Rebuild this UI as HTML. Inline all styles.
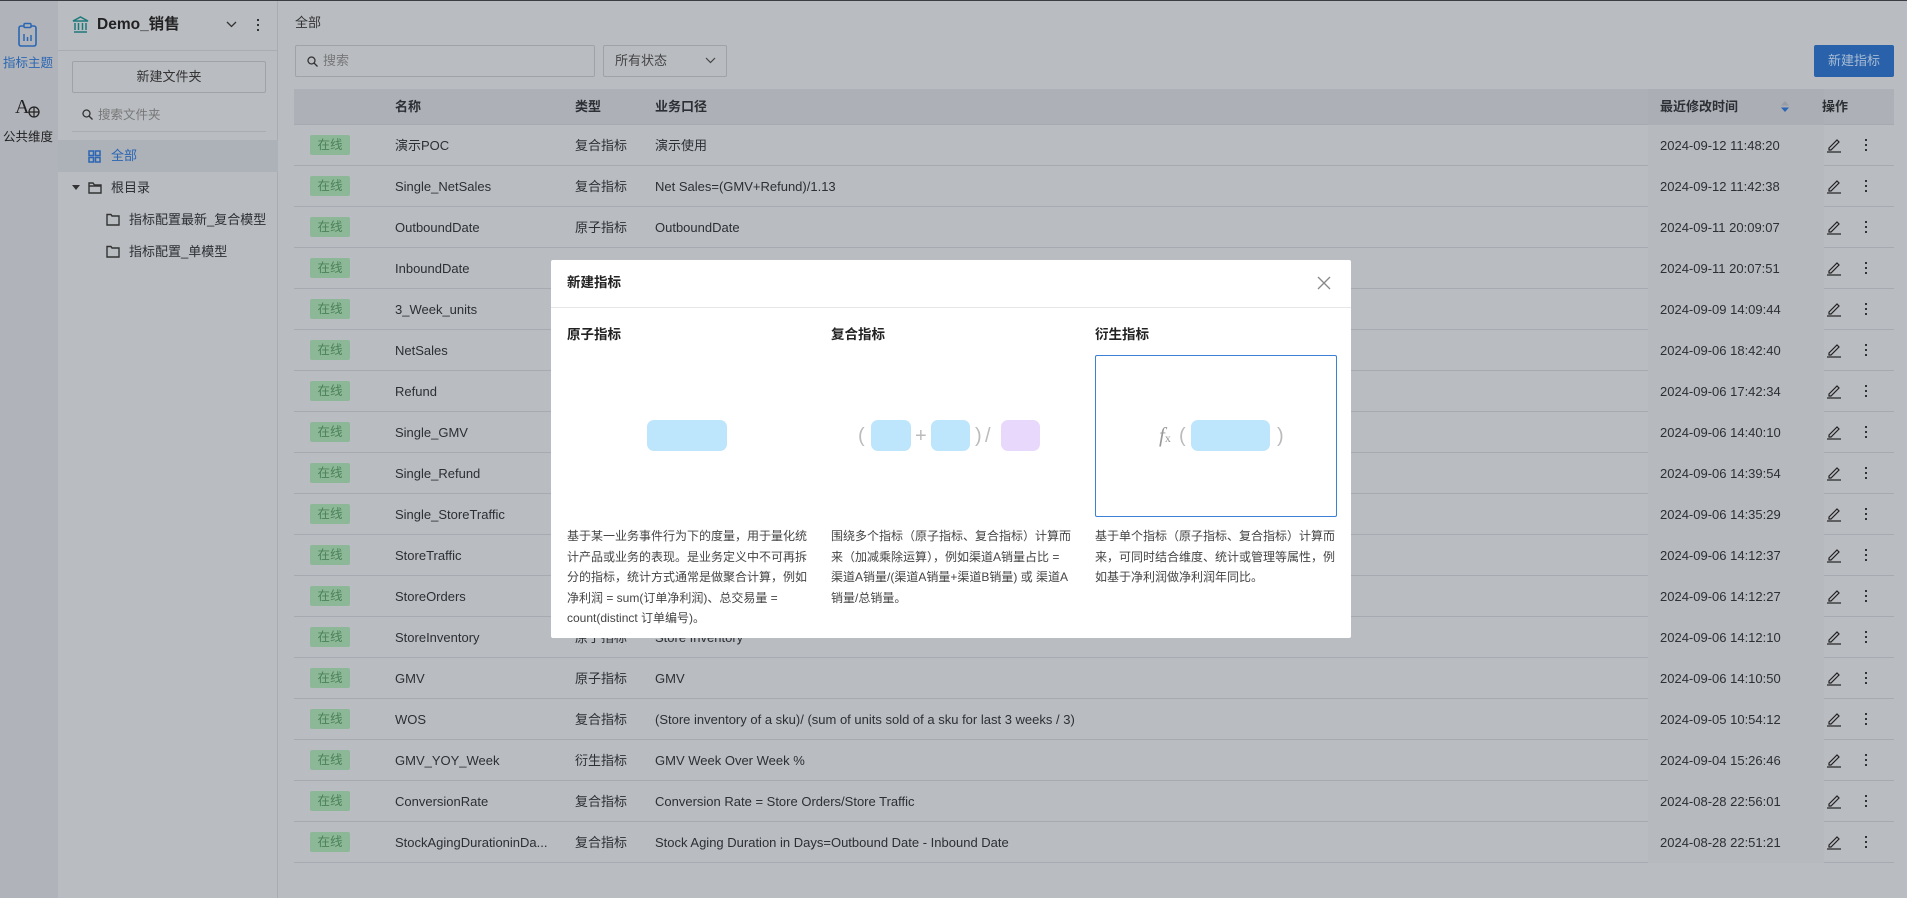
<!DOCTYPE html>
<html><head><meta charset="utf-8"><style>
*{box-sizing:border-box;margin:0;padding:0}
body{width:1907px;height:898px;overflow:hidden;position:relative;background:#b9bcc1;font-family:"Liberation Sans","Noto Sans CJK SC",sans-serif;color:#2c2f34;font-size:13px;line-height:16px}
.abs{position:absolute}
.rail{left:0;top:0;width:58px;height:898px;background:#b0b4ba}
.side{left:58px;top:0;width:220px;height:898px;background:#b9bcc1;border-right:1px solid #a9adb3}
.topline{left:0;top:0;width:1907px;height:1px;background:#3a3d42}
.row{position:absolute;left:294px;width:1600px;height:41px;border-bottom:1px solid #a7abb1}
.row span{position:absolute;top:13px;white-space:nowrap;line-height:16px}
.badge{left:16px;top:10px!important;width:40px;height:20px;background:#8db897;color:#4a8258;text-align:center;line-height:20px!important;border-radius:2px;font-size:12.5px}
.tc{position:absolute;left:1354px;top:0;width:176px;height:41px;background:#b6b9be}
.dots{position:absolute;left:1571px;top:14px;width:3px;height:13px}
.dots i{display:block;width:2px;height:2px;background:#333;margin:0 0 3px 0}
.modal{left:551px;top:260px;width:800px;height:378px;background:#fff;border-radius:2px}
.mt{font-weight:bold;font-size:13.5px;color:#222}
.desc{font-size:12px;line-height:20.6px;color:#444;width:240px}
.bx{position:absolute;background:#bde5fc;border-radius:7px;height:31px}
</style></head><body>
<div class="abs rail"></div>
<div class="abs side"></div>
<div class="abs topline"></div>
<!-- rail -->
<svg class="abs" style="left:17px;top:22px" width="22" height="26" viewBox="0 0 22 26"><rect x="2" y="4" width="17" height="20" rx="2" fill="none" stroke="#2a66b3" stroke-width="1.6"/><rect x="7" y="1.5" width="7" height="4" rx="1" fill="#b0b4ba" stroke="#2a66b3" stroke-width="1.5"/><path d="M7 12v7M10.5 15v4M14 13v6" stroke="#2a66b3" stroke-width="1.5"/></svg>
<div class="abs" style="left:3px;top:55px;font-size:12.5px;color:#2a66b3">指标主题</div>
<div class="abs" style="left:15px;top:96px;font-size:20px;line-height:22px;font-family:'Liberation Serif',serif;color:#222">A</div>
<svg class="abs" style="left:28px;top:106px" width="12" height="12" viewBox="0 0 12 12"><circle cx="6" cy="6" r="5" fill="none" stroke="#222" stroke-width="1.3"/><path d="M1 6h10M6 1v10" stroke="#222" stroke-width="1.2"/></svg>
<div class="abs" style="left:3px;top:129px;font-size:12.5px;color:#222">公共维度</div>
<!-- sidebar -->
<svg class="abs" style="left:72px;top:16px" width="17" height="17" viewBox="0 0 17 17"><path d="M1 5L8.5 1L16 5ZM2 16h13M3 7v7M6.5 7v7M10.5 7v7M14 7v7M1 5h15" fill="none" stroke="#1d7a7a" stroke-width="1.5"/></svg>
<div class="abs" style="left:97px;top:16px;font-size:15.5px;line-height:18px;font-weight:bold;color:#222">Demo_销售</div>
<svg class="abs" style="left:226px;top:21px" width="11" height="7"><path d="M1 1l4.5 4.5L10 1" fill="none" stroke="#333" stroke-width="1.3"/></svg>
<div class="abs" style="left:257px;top:19px;width:2px"><i style="display:block;width:2px;height:2px;background:#333;margin-bottom:3px"></i><i style="display:block;width:2px;height:2px;background:#333;margin-bottom:3px"></i><i style="display:block;width:2px;height:2px;background:#333"></i></div>
<div class="abs" style="left:58px;top:50px;width:220px;height:1px;background:#a9adb3"></div>
<div class="abs" style="left:72px;top:61px;width:194px;height:32px;border:1px solid #9fa3a9;border-radius:2px;text-align:center;line-height:30px;font-size:13px;color:#333">新建文件夹</div>
<svg class="abs" style="left:82px;top:109px" width="11" height="11"><circle cx="4.5" cy="4.5" r="3.5" fill="none" stroke="#333" stroke-width="1.3"/><path d="M7 7l3.5 3.5" stroke="#333" stroke-width="1.3"/></svg>
<div class="abs" style="left:98px;top:107px;font-size:12.5px;color:#777">搜索文件夹</div>
<div class="abs" style="left:72px;top:131px;width:194px;height:1px;background:#a9adb3"></div>
<div class="abs" style="left:58px;top:140px;width:220px;height:32px;background:#adb1b8"></div>
<svg class="abs" style="left:88px;top:150px" width="13" height="13"><g fill="none" stroke="#2a66b3" stroke-width="1.5"><rect x="1" y="1" width="4.5" height="4.5"/><rect x="7.5" y="1" width="4.5" height="4.5"/><rect x="1" y="7.5" width="4.5" height="4.5"/><rect x="7.5" y="7.5" width="4.5" height="4.5"/></g></svg>
<div class="abs" style="left:111px;top:148px;font-size:13px;color:#2a66b3">全部</div>
<svg class="abs" style="left:72px;top:185px" width="8" height="6"><path d="M0 0h8L4 5z" fill="#333"/></svg>
<svg class="abs" style="left:88px;top:181px" width="14" height="13"><path d="M1 2h4l1.5 2H13v8H1z M1 5h12" fill="none" stroke="#333" stroke-width="1.4"/></svg>
<div class="abs" style="left:111px;top:180px;font-size:13px">根目录</div>
<svg class="abs" style="left:106px;top:213px" width="14" height="13"><path d="M1 1.5h4l1 1.5H13v9H1z" fill="none" stroke="#333" stroke-width="1.4"/></svg>
<div class="abs" style="left:129px;top:212px;font-size:13px">指标配置最新_复合模型</div>
<svg class="abs" style="left:106px;top:245px" width="14" height="13"><path d="M1 1.5h4l1 1.5H13v9H1z" fill="none" stroke="#333" stroke-width="1.4"/></svg>
<div class="abs" style="left:129px;top:244px;font-size:13px">指标配置_单模型</div>
<!-- main -->
<div class="abs" style="left:295px;top:15px;font-size:13px;color:#333">全部</div>
<div class="abs" style="left:295px;top:45px;width:300px;height:32px;border:1px solid #9fa3a9;border-radius:2px"></div>
<svg class="abs" style="left:307px;top:56px" width="11" height="11"><circle cx="4.5" cy="4.5" r="3.5" fill="none" stroke="#333" stroke-width="1.3"/><path d="M7 7l3.5 3.5" stroke="#333" stroke-width="1.3"/></svg>
<div class="abs" style="left:323px;top:53px;font-size:13px;color:#777">搜索</div>
<div class="abs" style="left:603px;top:45px;width:124px;height:32px;border:1px solid #9fa3a9;border-radius:2px"></div>
<div class="abs" style="left:615px;top:53px;font-size:13px;color:#444">所有状态</div>
<svg class="abs" style="left:705px;top:57px" width="11" height="7"><path d="M1 1l4.5 4.5L10 1" fill="none" stroke="#444" stroke-width="1.2"/></svg>
<div class="abs" style="left:1814px;top:45px;width:80px;height:32px;background:#2962aa;border-radius:2px;color:#a9bcd5;font-size:13px;text-align:center;line-height:32px">新建指标</div>
<div class="row" style="top:89px;height:36px;background:#adb1b7;font-weight:bold">
<div class="tc" style="height:36px;background:#abafb5"></div>
<span style="left:101px;top:10px">名称</span><span style="left:281px;top:10px">类型</span><span style="left:361px;top:10px">业务口径</span><span style="left:1366px;top:10px">最近修改时间</span><span style="left:1528px;top:10px">操作</span>
<svg style="position:absolute;left:1487px;top:12px" width="8" height="11"><path d="M0 4.5L4 0L8 4.5z" fill="#9a9ea4"/><path d="M0 6.5L4 11L8 6.5z" fill="#2a66b3"/></svg>
</div>
<div id="rows"></div>
<script>
var d=[["演示POC","复合指标","演示使用","2024-09-12 11:48:20"],["Single_NetSales","复合指标","Net Sales=(GMV+Refund)/1.13","2024-09-12 11:42:38"],["OutboundDate","原子指标","OutboundDate","2024-09-11 20:09:07"],["InboundDate","","","2024-09-11 20:07:51"],["3_Week_units","","","2024-09-09 14:09:44"],["NetSales","","","2024-09-06 18:42:40"],["Refund","","","2024-09-06 17:42:34"],["Single_GMV","","","2024-09-06 14:40:10"],["Single_Refund","","","2024-09-06 14:39:54"],["Single_StoreTraffic","","","2024-09-06 14:35:29"],["StoreTraffic","","","2024-09-06 14:12:37"],["StoreOrders","","","2024-09-06 14:12:27"],["StoreInventory","原子指标","Store Inventory","2024-09-06 14:12:10"],["GMV","原子指标","GMV","2024-09-06 14:10:50"],["WOS","复合指标","(Store inventory of a sku)/ (sum of units sold of a sku for last 3 weeks / 3)","2024-09-05 10:54:12"],["GMV_YOY_Week","衍生指标","GMV Week Over Week %","2024-09-04 15:26:46"],["ConversionRate","复合指标","Conversion Rate = Store Orders/Store Traffic","2024-08-28 22:56:01"],["StockAgingDurationinDa...","复合指标","Stock Aging Duration in Days=Outbound Date - Inbound Date","2024-08-28 22:51:21"]];
var h="";d.forEach(function(r,i){var t=125+i*41;h+='<div class="row" style="top:'+t+'px"><div class="tc"></div><span class="badge">在线</span><span style="left:101px">'+r[0]+'</span><span style="left:281px">'+r[1]+'</span><span style="left:361px">'+r[2]+'</span><span style="left:1366px">'+r[3]+'</span><svg style="position:absolute;left:1532px;top:12px" width="16" height="16"><path d="M3 11L11 3l2 2-8 8H3z" fill="none" stroke="#222" stroke-width="1.2"/><path d="M1 15h14" stroke="#222" stroke-width="1.2"/></svg><div class="dots"><i></i><i></i><i></i></div></div>'});
document.getElementById("rows").innerHTML=h;
</script>
<!-- modal -->
<div class="abs modal">
<div class="abs mt" style="left:16px;top:15px">新建指标</div>
<svg class="abs" style="left:766px;top:16px" width="14" height="14"><path d="M1 1l12 12M13 1L1 13" stroke="#888" stroke-width="1.3"/></svg>
<div class="abs" style="left:0;top:47px;width:800px;height:1px;background:#e6e6e6"></div>
<div class="abs mt" style="left:16px;top:67px">原子指标</div>
<div class="abs mt" style="left:280px;top:67px">复合指标</div>
<div class="abs mt" style="left:544px;top:67px">衍生指标</div>
<div class="bx" style="left:96px;top:160px;width:80px"></div>
<div class="abs" style="left:307px;top:164px;font-size:20px;line-height:24px;color:#bbb">(</div>
<div class="bx" style="left:320px;top:160px;width:40px"></div>
<div class="abs" style="left:364px;top:164px;font-size:20px;line-height:24px;color:#bbb">+</div>
<div class="bx" style="left:380px;top:160px;width:39px"></div>
<div class="abs" style="left:424px;top:164px;font-size:20px;line-height:24px;color:#bbb">)</div>
<div class="abs" style="left:434px;top:164px;font-size:20px;line-height:24px;color:#bbb">/</div>
<div class="bx" style="left:450px;top:160px;width:39px;background:#e8d9fc"></div>
<div class="abs" style="left:544px;top:95px;width:242px;height:162px;border:1.5px solid #3b7fd6;border-radius:2px"></div>
<div class="abs" style="left:608px;top:163px;font-size:21px;line-height:24px;font-family:'Liberation Serif',serif;font-style:italic;color:#999">f<span style="font-size:12px;font-style:normal">x</span></div>
<div class="abs" style="left:628px;top:164px;font-size:20px;line-height:24px;color:#bbb">(</div>
<div class="bx" style="left:640px;top:160px;width:79px"></div>
<div class="abs" style="left:726px;top:164px;font-size:20px;line-height:24px;color:#bbb">)</div>
<div class="abs desc" style="left:16px;top:266px">基于某一业务事件行为下的度量，用于量化统计产品或业务的表现。是业务定义中不可再拆分的指标，统计方式通常是做聚合计算，例如净利润 = sum(订单净利润)、总交易量 = count(distinct 订单编号)。</div>
<div class="abs desc" style="left:280px;top:266px">围绕多个指标（原子指标、复合指标）计算而来（加减乘除运算），例如渠道A销量占比 = 渠道A销量/(渠道A销量+渠道B销量) 或 渠道A销量/总销量。</div>
<div class="abs desc" style="left:544px;top:266px">基于单个指标（原子指标、复合指标）计算而来，可同时结合维度、统计或管理等属性，例如基于净利润做净利润年同比。</div>
</div>
</body></html>
